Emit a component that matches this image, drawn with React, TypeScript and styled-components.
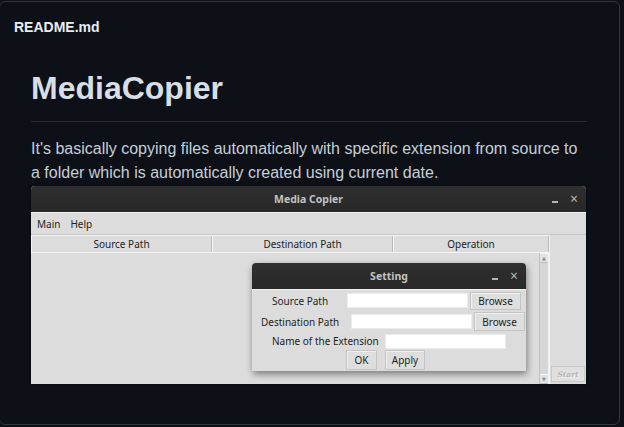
import React from "react";
import styled, { createGlobalStyle } from "styled-components";

const GlobalStyle = createGlobalStyle`
  html, body {
    margin: 0;
    padding: 0;
    background: #0d1117;
  }
  body {
    font-family: "Liberation Sans", Arial, sans-serif;
  }
`;

const Page = styled.div`
  padding-top: 1px;
  height: 426px;
  overflow: hidden;
`;

const Card = styled.div`
  margin-left: -1px;
  width: 619px;
  height: 422px;
  border: 1px solid #30363d;
  border-radius: 6px;
  background: #0d1117;
`;

const CardHeader = styled.div`
  padding: 15px 14px 13px;
  font-size: 14px;
  line-height: 21px;
  font-weight: 700;
  color: #e6edf3;
`;

const Article = styled.div`
  padding: 17px 32px 0 31px;
`;

const Title = styled.h1`
  margin: 0;
  font-size: 32px;
  line-height: 40px;
  font-weight: 700;
  color: #d8dee6;
  padding-bottom: 13px;
  border-bottom: 1px solid #262c34;
`;

const Para = styled.p`
  margin: 15px 0 0;
  font-size: 16px;
  line-height: 24px;
  color: #c6ced8;
`;

/* ---- the screenshot of the Tk app ---- */

const AppWindow = styled.div`
  position: relative;
  margin-top: 1px;
  width: 555px;
  height: 198px;
  background: #dcdcdc;
  border-radius: 4px 4px 0 0;
  box-shadow: 0 0 3px rgba(0, 0, 0, 0.6);
  display: flex;
  flex-direction: column;
  font-family: "Noto Sans", "DejaVu Sans", sans-serif;
  overflow: hidden;
`;

const TitleBar = styled.div`
  position: relative;
  height: 26px;
  flex: none;
  background: linear-gradient(#2f2f2f, #282828);
  color: #c2c2c2;
  font-size: 10.5px;
  font-weight: 700;
  display: flex;
  align-items: center;
  justify-content: center;
  border-bottom: 1px solid #f2f2f2;
`;

const Controls = styled.div`
  position: absolute;
  right: 8px;
  top: 0;
  height: 100%;
  display: flex;
  align-items: center;
  gap: 12px;
  color: #b5b5b5;
  font-weight: 400;
`;

const MinBtn = styled.span`
  display: block;
  width: 6px;
  height: 1.5px;
  margin-top: 6px;
  background: #b5b5b5;
`;

const CloseBtn = styled.span`
  font-size: 14px;
  line-height: 14px;
`;

const MenuBar = styled.div`
  height: 21px;
  flex: none;
  display: flex;
  align-items: center;
  gap: 10px;
  padding-left: 6px;
  font-size: 10px;
  color: #1e1e1e;
  border-bottom: 1px solid #c8c8c8;
`;

const Body = styled.div`
  flex: 1;
  display: flex;
  min-height: 0;
`;

const TableArea = styled.div`
  width: 518px;
  display: flex;
  flex-direction: column;
`;

const HeaderRow = styled.div`
  display: flex;
  height: 16px;
  border-top: 1px solid #f4f4f4;
  border-bottom: 1px solid #f4f4f4;
`;

const HeaderCell = styled.div<{ $w: number }>`
  width: ${({ $w }) => $w}px;
  box-sizing: border-box;
  font-size: 10px;
  color: #1e1e1e;
  display: flex;
  align-items: center;
  justify-content: center;
  border-right: 1px solid #b9b9b9;
  border-left: 1px solid #f6f6f6;
`;

const ListArea = styled.div`
  flex: 1;
  display: flex;
  justify-content: flex-end;
`;

const ScrollBar = styled.div`
  width: 10px;
  box-sizing: border-box;
  border-left: 1px solid #c0c0c0;
  border-right: 1px solid #f2f2f2;
  background: #d6d6d6;
  display: flex;
  flex-direction: column;
  justify-content: space-between;
`;

const ScrollArrow = styled.div`
  height: 8px;
  background: #e2e2e2;
  border-bottom: 1px solid #bdbdbd;
  border-top: 1px solid #f6f6f6;
  color: #8a8a8a;
  font-size: 5px;
  line-height: 8px;
  text-align: center;
`;

const SidePanel = styled.div`
  flex: 1;
  border-left: 1px solid #f3f3f3;
  display: flex;
  flex-direction: column;
  justify-content: flex-end;
  align-items: flex-start;
  padding: 0 0 2px 1px;
`;

const StartBtn = styled.div`
  width: 34px;
  height: 16px;
  box-sizing: border-box;
  border: 1px solid #c9c9c9;
  background: #e0e0e0;
  color: #b2b2b2;
  font-family: "DejaVu Serif", serif;
  font-style: italic;
  font-weight: 700;
  font-size: 7.5px;
  display: flex;
  align-items: center;
  justify-content: center;
  text-shadow: 1px 1px 0 #f4f4f4;
`;

/* ---- Setting dialog, floating over the window ---- */

const Dialog = styled.div`
  position: absolute;
  left: 221px;
  top: 77px;
  width: 274px;
  height: 108px;
  background: #dcdcdc;
  border-radius: 4px 4px 0 0;
  box-shadow: 1px 3px 7px rgba(0, 0, 0, 0.45);
  display: flex;
  flex-direction: column;
  overflow: hidden;
`;

const DialogBody = styled.div`
  padding-top: 1px;
  display: flex;
  flex-direction: column;
`;

const Row = styled.div<{ $left: number; $top: number; $h: number }>`
  display: flex;
  align-items: center;
  height: ${({ $h }) => $h}px;
  margin-top: ${({ $top }) => $top}px;
  padding-left: ${({ $left }) => $left}px;
  font-size: 10px;
  color: #1e1e1e;
`;

const Label = styled.span<{ $w: number }>`
  width: ${({ $w }) => $w}px;
  white-space: nowrap;
`;

const Entry = styled.div`
  width: 121px;
  height: 15px;
  background: #ffffff;
  border: 1px solid #ececec;
  box-sizing: border-box;
`;

const TkButton = styled.div<{ $w: number; $h: number; $gap?: number }>`
  width: ${({ $w }) => $w}px;
  height: ${({ $h }) => $h}px;
  margin-left: ${({ $gap }) => $gap ?? 2}px;
  box-sizing: border-box;
  background: #dedede;
  border: 1px solid #c4c4c4;
  box-shadow: inset 1px 1px 0 #f0f0f0;
  font-size: 10px;
  color: #1e1e1e;
  display: flex;
  align-items: center;
  justify-content: center;
`;

export default function App() {
  return (
    <Page>
      <GlobalStyle />
      <Card>
        <CardHeader>README.md</CardHeader>
        <Article>
          <Title>MediaCopier</Title>
          <Para>
            It's basically copying files automatically with specific extension
            from source to a folder which is automatically created using current
            date.
          </Para>
          <AppWindow>
            <TitleBar>
              Media Copier
              <Controls>
                <MinBtn />
                <CloseBtn>×</CloseBtn>
              </Controls>
            </TitleBar>
            <MenuBar>
              <span>Main</span>
              <span>Help</span>
            </MenuBar>
            <Body>
              <TableArea>
                <HeaderRow>
                  <HeaderCell $w={181}>Source Path</HeaderCell>
                  <HeaderCell $w={181}>Destination Path</HeaderCell>
                  <HeaderCell $w={156}>Operation</HeaderCell>
                </HeaderRow>
                <ListArea>
                  <ScrollBar>
                    <ScrollArrow>▲</ScrollArrow>
                    <ScrollArrow>▼</ScrollArrow>
                  </ScrollBar>
                </ListArea>
              </TableArea>
              <SidePanel>
                <StartBtn>Start</StartBtn>
              </SidePanel>
            </Body>

            <Dialog>
              <TitleBar>
                Setting
                <Controls>
                  <MinBtn />
                  <CloseBtn>×</CloseBtn>
                </Controls>
              </TitleBar>
              <DialogBody>
                <Row $left={20} $top={0} $h={19}>
                  <Label $w={75}>Source Path</Label>
                  <Entry />
                  <TkButton $w={51} $h={18}>Browse</TkButton>
                </Row>
                <Row $left={9} $top={2} $h={19}>
                  <Label $w={90}>Destination Path</Label>
                  <Entry />
                  <TkButton $w={51} $h={19}>Browse</TkButton>
                </Row>
                <Row $left={20} $top={2} $h={16}>
                  <Label $w={113}>Name of the Extension</Label>
                  <Entry />
                </Row>
                <Row $left={92} $top={1} $h={20}>
                  <TkButton $w={31} $h={20}>OK</TkButton>
                  <TkButton $w={40} $h={20} $gap={8}>
                    Apply
                  </TkButton>
                </Row>
              </DialogBody>
            </Dialog>
          </AppWindow>
        </Article>
      </Card>
    </Page>
  );
}
